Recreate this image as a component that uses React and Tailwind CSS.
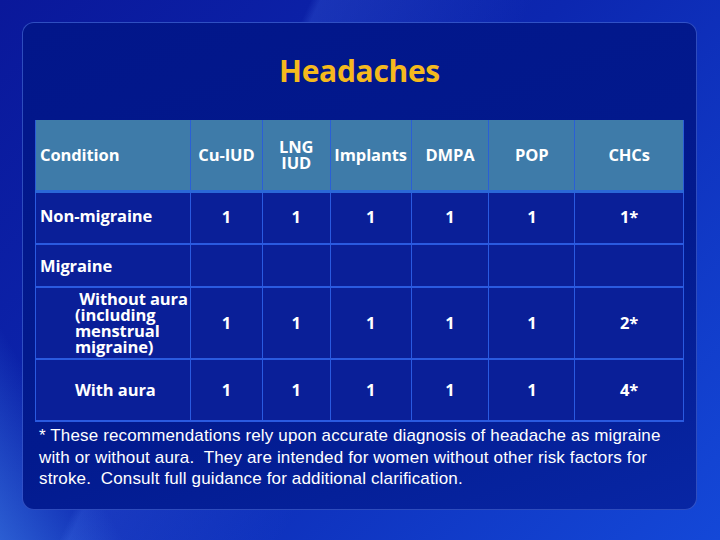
const COLS = [
  { label: "Condition", w: "w-[155px]", left: true },
  { label: "Cu-IUD", w: "w-[72px]" },
  { label: "LNG IUD", w: "w-[68px]", stack: true },
  { label: "Implants", w: "w-[81px]" },
  { label: "DMPA", w: "w-[78px]" },
  { label: "POP", w: "w-[86px]" },
  { label: "CHCs", w: "w-[109px]" },
];

const ROWS = [
  { name: "Non-migraine", vals: ["1", "1", "1", "1", "1", "1*"], h: "h-[53px]" },
  { name: "Migraine", vals: ["", "", "", "", "", ""], h: "h-[43px]" },
  {
    name: ["\u00a0Without aura", "(including", "menstrual", "migraine)"],
    vals: ["1", "1", "1", "1", "1", "2*"],
    h: "h-[72px]",
    sub: true,
  },
  { name: "With aura", vals: ["1", "1", "1", "1", "1", "4*"], h: "h-[62px]", sub: true },
];

export default function App() {
  return (
    <div className="w-[720px] h-[540px] overflow-hidden bg-[linear-gradient(115deg,transparent_0%,transparent_32%,rgba(90,140,255,0.18)_33%,transparent_55%),linear-gradient(60deg,rgba(70,140,240,0.55)_0%,transparent_12%),linear-gradient(135deg,#0a189a_0%,#0c27b0_45%,#1448d8_100%)] p-[22px_23px_30px_22px] font-['Open_Sans','Liberation_Sans',sans-serif]">
      <div className="h-full rounded-[12px] border border-[#4d6fe0]/60 bg-[linear-gradient(160deg,#02168a_0%,#021a8e_60%,#0826a4_100%)] px-[12px] pt-[33px]">
        <h1 className="text-center text-[30px] font-bold leading-none text-[#f5b91d] tracking-[-0.3px]">
          Headaches
        </h1>

        <table className="mt-[34px] border-collapse text-white font-bold text-[16.5px] tracking-[-0.1px]">
          <thead>
            <tr className="h-[71px] bg-[#3e7ba9] border-b-[3px] border-[#2a67d8]">
              {COLS.map((c) => (
                <th
                  key={c.label}
                  className={`${c.w} border-x border-[#2a5fd6] leading-[16px] ${
                    c.left ? "text-left pl-[4px]" : "text-center"
                  }`}
                >
                  {c.stack ? (
                    <>
                      LNG
                      <br />
                      IUD
                    </>
                  ) : (
                    c.label
                  )}
                </th>
              ))}
            </tr>
          </thead>
          <tbody className="bg-[#0a1f98]">
            {ROWS.map((r, i) => (
              <tr key={i} className={`${r.h} border-b-2 border-[#2a5ae0]`}>
                <td
                  className={`border-x border-[#2a5ae0] leading-[16px] whitespace-nowrap ${
                    r.sub ? "pl-[39px]" : "pl-[4px]"
                  } ${i === 0 ? "align-top pt-[15px]" : ""}`}
                >
                  {Array.isArray(r.name)
                    ? r.name.map((n) => <div key={n}>{n}</div>)
                    : r.name}
                </td>
                {r.vals.map((v, j) => (
                  <td key={j} className="border-x border-[#2a5ae0] text-center">
                    {v}
                  </td>
                ))}
              </tr>
            ))}
          </tbody>
        </table>

        <p className="mt-[3px] pl-[4px] text-white text-[17px] leading-[21.5px] whitespace-nowrap font-['Liberation_Sans',sans-serif] tracking-[0.15px]">
          * These recommendations rely upon accurate diagnosis of headache as migraine
          <br />
          with or without aura.&nbsp; They are intended for women without other risk factors for
          <br />
          stroke.&nbsp; Consult full guidance for additional clarification.
        </p>
      </div>
    </div>
  );
}
